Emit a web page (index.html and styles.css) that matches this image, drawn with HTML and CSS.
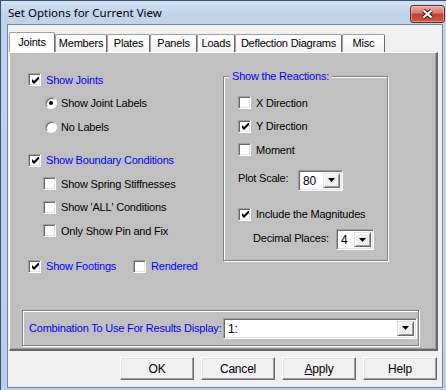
FILE: index.html
```html
<!DOCTYPE html>
<html lang="en">
<head>
    <meta charset="UTF-8">
    <title>Set Options for Current View</title>
    <link rel="stylesheet" href="styles.css">
</head>
<body>
    <div class="window">
        <div class="titlebar">
            <span class="title">Set Options for Current View</span>
            <button class="close-btn" aria-label="Close">
                <svg width="13" height="10" viewBox="0 0 13 10">
                    <path d="M2.5 1.5 L10.5 8.5 M10.5 1.5 L2.5 8.5" stroke="#3d1c1a" stroke-width="4.2" fill="none"/>
                    <path d="M2.5 1.5 L10.5 8.5 M10.5 1.5 L2.5 8.5" stroke="#ffffff" stroke-width="2.2" fill="none"/>
                </svg>
            </button>
        </div>

        <div class="client">
            <div class="tabs">
                <div class="tab active" style="width: 46px">Joints</div>
                <div class="tab" style="width: 52px">Members</div>
                <div class="tab" style="width: 43px">Plates</div>
                <div class="tab" style="width: 47px">Panels</div>
                <div class="tab" style="width: 38px">Loads</div>
                <div class="tab" style="width: 107px">Deflection Diagrams</div>
                <div class="tab" style="width: 43px">Misc</div>
            </div>

            <div class="panel">
                <div class="columns">
                    <div class="opt-list">
                        <label class="opt">
                            <span class="check on"><svg width="7" height="7" viewBox="0 0 7 7"><path d="M0 2 L2 4 L7 -1 L7 2 L2 7 L0 5 Z"/></svg></span>
                            <span class="blue">Show Joints</span>
                        </label>
                        <label class="opt indent-radio"><span class="radio on"></span>Show Joint Labels</label>
                        <label class="opt indent-radio"><span class="radio"></span>No Labels</label>

                        <label class="opt gap">
                            <span class="check on"><svg width="7" height="7" viewBox="0 0 7 7"><path d="M0 2 L2 4 L7 -1 L7 2 L2 7 L0 5 Z"/></svg></span>
                            <span class="blue">Show Boundary Conditions</span>
                        </label>
                        <label class="opt indent"><span class="check"></span>Show Spring Stiffnesses</label>
                        <label class="opt indent"><span class="check"></span>Show 'ALL' Conditions</label>
                        <label class="opt indent"><span class="check"></span>Only Show Pin and Fix</label>

                        <div class="opt gap-lg">
                            <label class="inline footings">
                                <span class="check on"><svg width="7" height="7" viewBox="0 0 7 7"><path d="M0 2 L2 4 L7 -1 L7 2 L2 7 L0 5 Z"/></svg></span>
                                <span class="blue">Show Footings</span>
                            </label>
                            <label class="inline">
                                <span class="check"></span>
                                <span class="blue">Rendered</span>
                            </label>
                        </div>
                    </div>

                    <fieldset class="group reactions">
                        <legend>Show the Reactions:</legend>
                        <label class="opt"><span class="check"></span>X Direction</label>
                        <label class="opt">
                            <span class="check on"><svg width="7" height="7" viewBox="0 0 7 7"><path d="M0 2 L2 4 L7 -1 L7 2 L2 7 L0 5 Z"/></svg></span>
                            Y Direction
                        </label>
                        <label class="opt"><span class="check"></span>Moment</label>

                        <div class="field-row plot-row">
                            <span class="field-label">Plot Scale:</span>
                            <div class="combo plot">
                                <span class="combo-value">80</span>
                                <span class="combo-btn"><svg width="7" height="4" viewBox="0 0 7 4"><path d="M0 0 H7 L3.5 4 Z"/></svg></span>
                            </div>
                        </div>

                        <label class="opt magn">
                            <span class="check on"><svg width="7" height="7" viewBox="0 0 7 7"><path d="M0 2 L2 4 L7 -1 L7 2 L2 7 L0 5 Z"/></svg></span>
                            Include the Magnitudes
                        </label>

                        <div class="field-row decimal-row">
                            <span class="field-label">Decimal Places:</span>
                            <div class="combo decimal">
                                <span class="combo-value">4</span>
                                <span class="combo-btn"><svg width="7" height="4" viewBox="0 0 7 4"><path d="M0 0 H7 L3.5 4 Z"/></svg></span>
                            </div>
                        </div>
                    </fieldset>
                </div>

                <div class="group results">
                    <span class="blue">Combination To Use For Results Display:</span>
                    <div class="combo wide">
                        <span class="combo-value">1:</span>
                        <span class="combo-btn"><svg width="7" height="4" viewBox="0 0 7 4"><path d="M0 0 H7 L3.5 4 Z"/></svg></span>
                    </div>
                </div>
            </div>

            <div class="buttons">
                <button class="btn">OK</button>
                <button class="btn">Cancel</button>
                <button class="btn"><u>A</u>pply</button>
                <button class="btn">Help</button>
            </div>
        </div>
    </div>
</body>
</html>
```

FILE: styles.css
```css
* {
    box-sizing: border-box;
}
body {
    margin: 0;
    background: #ffffff;
    font-family: "Liberation Sans", Arial, sans-serif;
    font-size: 11px;
    letter-spacing: -0.2px;
    color: #000;
}
.window {
    width: 446px;
    height: 390px;
    display: flex;
    flex-direction: column;
    background: linear-gradient(#d3e1f2, #bfd3eb 14px, #b9cfe9);
    border-left: 1px solid #3a5573;
    border-top: 1px solid #3a5573;
}
.titlebar {
    height: 23px;
    display: flex;
    justify-content: space-between;
    align-items: flex-start;
    padding: 0 1px 0 7px;
}
.title {
    font-family: "Noto Sans", "Open Sans", sans-serif;
    font-size: 11.5px;
    letter-spacing: 0;
    line-height: 23px;
    color: #000;
}
.close-btn {
    width: 35px;
    height: 18px;
    margin-top: 4px;
    padding: 0;
    border: 1px solid #5b2a26;
    border-radius: 3px;
    background: linear-gradient(#e9a99d, #d7776a 45%, #c2402f 50%, #cd5c4b);
    box-shadow: inset 0 0 0 1px rgba(255, 255, 255, 0.35);
    display: flex;
    align-items: center;
    justify-content: center;
}
.client {
    flex: 1;
    margin: 0 3px 2px 6px;
    border: 1px solid #7088a6;
    background: #f0f0f0;
    display: flex;
    flex-direction: column;
}
.tabs {
    height: 27px;
    display: flex;
    align-items: flex-end;
    padding-left: 1px;
}
.tab {
    height: 18px;
    line-height: 17px;
    text-align: center;
    background: linear-gradient(#ffffff, #f2f2f2);
    border: 1px solid #a0a0a0;
    border-bottom: none;
    border-right-color: #696969;
    border-radius: 2px 2px 0 0;
}
.tab.active {
    height: 20px;
    line-height: 19px;
    background: #ffffff;
}
.panel {
    margin-left: 1px;
    width: 429px;
    height: 299px;
    background: #c0c0c0;
    border-top: 1px solid #ffffff;
    border-left: 1px solid #ffffff;
    border-right: 2px solid #696969;
    border-bottom: 2px solid #696969;
    box-shadow: inset -1px -1px 0 #a0a0a0;
    display: flex;
    flex-direction: column;
}
.columns {
    display: flex;
    align-items: flex-start;
    padding: 15px 0 0 18px;
}
.opt-list {
    width: 195px;
}
.opt {
    height: 23.5px;
    display: flex;
    align-items: center;
    white-space: nowrap;
}
.opt.gap {
    margin-top: 10px;
}
.opt.gap-lg {
    margin-top: 12px;
}
.indent {
    padding-left: 15px;
}
.indent-radio {
    padding-left: 17px;
}
.inline {
    display: flex;
    align-items: center;
}
.footings {
    width: 105px;
}
.blue {
    color: #0000ff;
}
.check {
    width: 13px;
    height: 13px;
    margin-right: 5px;
    flex-shrink: 0;
    background: #ffffff;
    border: 1px solid;
    border-color: #a0a0a0 #ffffff #ffffff #a0a0a0;
    box-shadow: inset 1px 1px 0 #696969, inset -1px -1px 0 #e3e3e3;
    display: flex;
    align-items: center;
    justify-content: center;
}
.check svg {
    margin: 1px 0 0 1px;
}
.radio {
    width: 12px;
    height: 12px;
    margin-right: 4px;
    flex-shrink: 0;
    border-radius: 50%;
    background: #ffffff;
    border: 1px solid;
    border-color: #a0a0a0 #ffffff #ffffff #a0a0a0;
    box-shadow: inset 1px 1px 0 #696969;
    display: flex;
    align-items: center;
    justify-content: center;
}
.radio.on::after {
    content: "";
    width: 4px;
    height: 4px;
    border-radius: 50%;
    background: #000;
}
.group {
    border: 1px solid #808080;
    box-shadow: 1px 1px 0 #ffffff, inset 1px 1px 0 #ffffff;
}
.reactions {
    width: 165px;
    margin: 1px 0 0;
    padding: 8px 0 10px 14px;
    min-width: 0;
}
.reactions legend {
    color: #0000ff;
    line-height: 14px;
    padding: 0 3px;
    margin-left: -9px;
    background: #c0c0c0;
}
.field-row {
    display: flex;
    align-items: center;
    height: 21px;
}
.field-label {
    margin-bottom: 4px;
}
.plot-row {
    margin-top: 8px;
}
.plot-row .field-label {
    width: 60px;
}
.magn {
    margin-top: 12px;
}
.decimal-row {
    margin-top: 3px;
    padding-left: 15px;
}
.decimal-row .field-label {
    width: 83px;
}
.combo {
    height: 21px;
    display: flex;
    background: #ffffff;
    border: 1px solid;
    border-color: #a0a0a0 #ffffff #ffffff #a0a0a0;
    box-shadow: inset 1px 1px 0 #696969, inset -1px -1px 0 #e3e3e3;
    padding: 2px;
}
.combo.plot {
    width: 45px;
}
.combo.decimal {
    width: 38px;
}
.combo.wide {
    width: 194px;
}
.combo-value {
    flex: 1;
    padding-left: 2px;
    line-height: 16px;
    font-size: 12px;
}
.combo-btn {
    width: 17px;
    background: #f0f0f0;
    border: 1px solid;
    border-color: #e3e3e3 #696969 #696969 #e3e3e3;
    box-shadow: inset 1px 1px 0 #ffffff, inset -1px -1px 0 #a0a0a0;
    display: flex;
    align-items: center;
    justify-content: center;
}
.results {
    margin: auto 0 3px 12px;
    width: 397px;
    height: 36px;
    display: flex;
    align-items: center;
    justify-content: space-between;
    padding: 0 1px 0 6px;
}
.buttons {
    display: flex;
    justify-content: flex-end;
    gap: 7px;
    margin-top: 6px;
    padding-right: 5px;
}
.btn {
    width: 74px;
    height: 23px;
    font-family: "Liberation Sans", Arial, sans-serif;
    font-size: 12px;
    letter-spacing: -0.2px;
    color: #000;
    background: #f0f0f0;
    border: 1px solid;
    border-color: #ffffff #696969 #696969 #ffffff;
    box-shadow: inset -1px -1px 0 #a0a0a0, inset 1px 1px 0 #e3e3e3;
    padding: 0;
}
```
